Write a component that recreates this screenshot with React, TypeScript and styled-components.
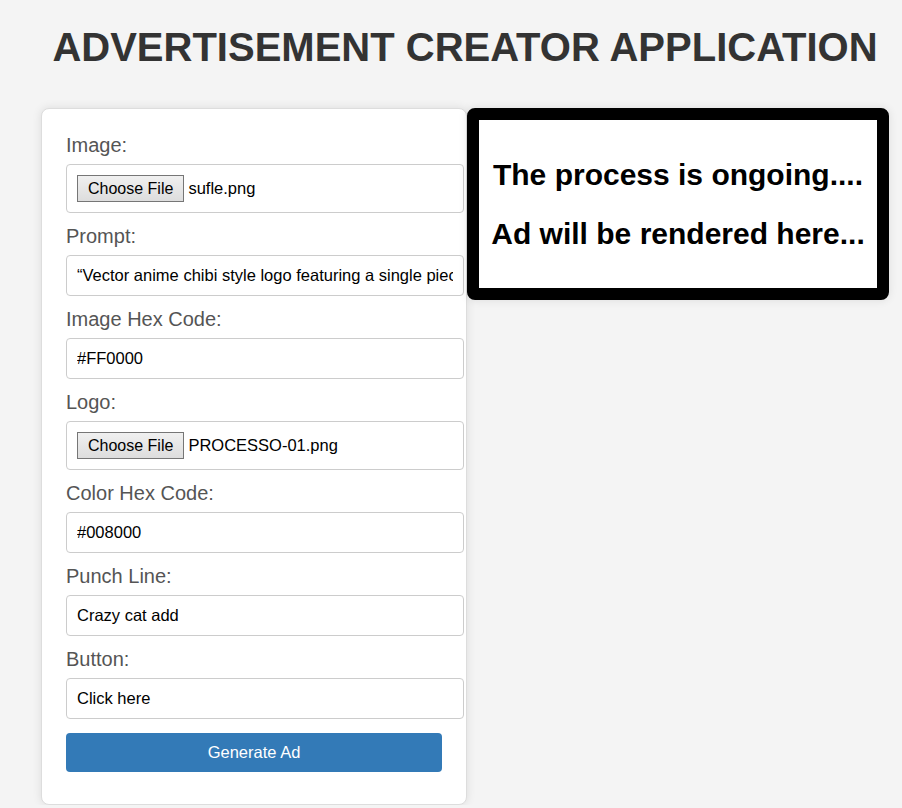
import * as React from 'react';
import styled, { createGlobalStyle } from 'styled-components';

const GlobalStyle = createGlobalStyle`
  body {
    margin: 0;
    background-color: #f4f4f4;
    font-family: 'Liberation Sans', Arial, sans-serif;
  }
`;

const Page = styled.div`
  padding-left: 41px;
`;

const Wrapper = styled.div`
  width: 848px;
`;

const Title = styled.h1`
  margin: 25px 0 38px;
  text-align: center;
  font-size: 40px;
  font-weight: 700;
  color: #333333;
`;

const Row = styled.div`
  display: flex;
  align-items: flex-start;
`;

const FormCard = styled.form`
  box-sizing: border-box;
  width: 426px;
  padding: 25px 24px 32px;
  background-color: #ffffff;
  border: 1px solid #dddddd;
  border-radius: 8px;
  box-shadow: 0 0 10px rgba(0, 0, 0, 0.1);
`;

const Label = styled.label`
  display: block;
  margin-bottom: 7px;
  font-size: 20px;
  line-height: 23px;
  color: #555555;
`;

const TextInput = styled.input`
  display: block;
  width: 100%;
  margin: 0 0 12px;
  padding: 10px;
  border: 1px solid #cccccc;
  border-radius: 4px;
  font-family: 'Liberation Sans', Arial, sans-serif;
  font-size: 16.5px;
  line-height: 19px;
  color: #000000;
  background-color: #ffffff;
  outline: none;
`;

const FileBox = styled.div`
  display: flex;
  align-items: center;
  width: 100%;
  margin-bottom: 12px;
  padding: 10px;
  border: 1px solid #cccccc;
  border-radius: 4px;
  font-size: 16.5px;
  color: #000000;
`;

const FileButton = styled.span`
  display: inline-block;
  margin-right: 4px;
  padding: 4px 10px 3px;
  border: 1px solid #767676;
  background: linear-gradient(#f0f0f0, #dddddd);
  line-height: 18px;
  font-size: 16px;
  color: #000000;
`;

const SubmitButton = styled.button`
  display: block;
  width: 100%;
  margin-top: 14px;
  padding: 10px;
  border: none;
  border-radius: 4px;
  background-color: #337ab7;
  font-family: 'Liberation Sans', Arial, sans-serif;
  font-size: 16.5px;
  line-height: 19px;
  color: #ffffff;
  cursor: pointer;
`;

const AdBox = styled.div`
  box-sizing: border-box;
  width: 422px;
  padding: 13px 10px 12px;
  background-color: #ffffff;
  border: 12px solid #000000;
  border-radius: 8px;
  box-shadow: 0 0 10px rgba(0, 0, 0, 0.1);
  text-align: center;
`;

const AdLine = styled.h2`
  margin: 25px 0;
  font-size: 30px;
  font-weight: 700;
  color: #000000;
`;

type FileFieldProps = {
  label: string;
  fileName: string;
};

const FileField: React.FC<FileFieldProps> = ({ label, fileName }) => (
  <>
    <Label>{label}</Label>
    <FileBox>
      <FileButton>Choose File</FileButton>
      <span>{fileName}</span>
    </FileBox>
  </>
);

type TextFieldProps = {
  label: string;
  value: string;
};

const TextField: React.FC<TextFieldProps> = ({ label, value }) => (
  <>
    <Label>{label}</Label>
    <TextInput type="text" defaultValue={value} />
  </>
);

const App = (): JSX.Element => {
  return (
    <Page>
      <GlobalStyle />
      <Wrapper>
        <Title>ADVERTISEMENT CREATOR APPLICATION</Title>
        <Row>
          <FormCard onSubmit={(e) => e.preventDefault()}>
            <FileField label="Image:" fileName="sufle.png" />
            <TextField
              label="Prompt:"
              value="“Vector anime chibi style logo featuring a single piece of cake with a cheerful face”"
            />
            <TextField label="Image Hex Code:" value="#FF0000" />
            <FileField label="Logo:" fileName="PROCESSO-01.png" />
            <TextField label="Color Hex Code:" value="#008000" />
            <TextField label="Punch Line:" value="Crazy cat add" />
            <TextField label="Button:" value="Click here" />
            <SubmitButton type="submit">Generate Ad</SubmitButton>
          </FormCard>
          <AdBox>
            <AdLine>The process is ongoing....</AdLine>
            <AdLine>Ad will be rendered here...</AdLine>
          </AdBox>
        </Row>
      </Wrapper>
    </Page>
  );
};

export default App;
